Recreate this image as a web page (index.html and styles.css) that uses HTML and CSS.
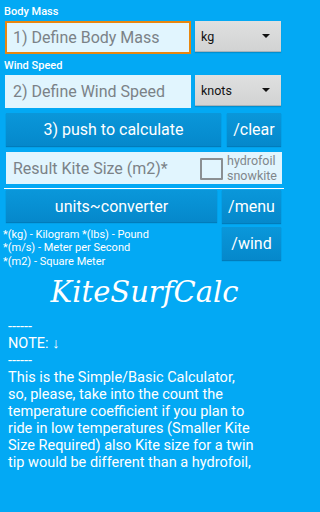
FILE: index.html
```html
<!DOCTYPE html>
<html>
<head>
<meta charset="utf-8">
<link rel="stylesheet" href="styles.css">
</head>
<body>
<div class="app">
  <div class="label">Body Mass</div>
  <div class="row">
    <div class="input focused">1) Define Body Mass</div>
    <div class="spinner"><span>kg</span><span class="caret"></span></div>
  </div>
  <div class="label second">Wind Speed</div>
  <div class="row">
    <div class="input">2) Define Wind Speed</div>
    <div class="spinner"><span>knots</span><span class="caret"></span></div>
  </div>
  <div class="row buttons">
    <div class="btn wide">3) push to calculate</div>
    <div class="btn narrow">/clear</div>
  </div>
  <div class="result">
    <span class="result-text">Result Kite Size (m2)*</span>
    <span class="check"></span>
    <span class="check-label">hydrofoil<br>snowkite</span>
  </div>
  <div class="divider"></div>
  <div class="grid">
    <div class="left">
      <div class="btn units">units~converter</div>
      <div class="legend">
        <div>*(kg) - Kilogram *(lbs) - Pound</div>
        <div>*(m/s) - Meter per Second</div>
        <div>*(m2) - Square Meter</div>
      </div>
    </div>
    <div class="right">
      <div class="btn side">/menu</div>
      <div class="btn side">/wind</div>
    </div>
  </div>
  <div class="title">KiteSurfCalc</div>
  <div class="note">
    <div>------</div>
    <div>NOTE: ↓</div>
    <div>------</div>
    <p>This is the Simple/Basic Calculator, so, please, take into the count the temperature coefficient if you plan to ride in low temperatures (Smaller Kite Size Required) also Kite size for a twin tip would be different than a hydrofoil,</p>
  </div>
</div>
</body>
</html>
```

FILE: styles.css
```css
html, body {
  margin: 0;
  padding: 0;
  background: #03a9f4;
}
body {
  width: 288px;
  height: 512px;
  overflow: hidden;
}
.app {
  font-family: Roboto, "Noto Sans", sans-serif;
  color: #ffffff;
  padding: 3px 6px 0 5px;
}
.label {
  font-size: 11px;
  font-weight: 500;
  height: 18px;
  line-height: 18px;
  margin-left: -1px;
}
.label.second {
  margin-top: 3px;
}
.row {
  display: flex;
  align-items: flex-start;
  gap: 4px;
}
.input {
  width: 186px;
  height: 33px;
  box-sizing: border-box;
  background: #e1f5fe;
  color: #7b8287;
  font-size: 16px;
  line-height: 33px;
  padding-left: 8px;
  white-space: nowrap;
}
.input.focused {
  border: 2px solid #e8870f;
  padding-left: 6px;
  line-height: 29px;
}
.spinner {
  width: 86px;
  height: 31px;
  box-sizing: border-box;
  background: linear-gradient(#dfe0e0, #d2d3d3);
  border-bottom: 1px solid #a9b3b8;
  box-shadow: 0 1px 1px rgba(0,0,0,0.15);
  color: #111;
  font-size: 12.5px;
  display: flex;
  align-items: center;
  justify-content: space-between;
  padding: 0 11px 0 6px;
}
.caret {
  width: 0;
  height: 0;
  border-left: 4px solid transparent;
  border-right: 4px solid transparent;
  border-top: 4px solid #111;
}
.buttons {
  margin-top: 5px;
  gap: 6px;
}
.btn {
  background: linear-gradient(#0a97da, #0588cb);
  box-shadow: 0 1px 1px rgba(0,40,80,0.35);
  color: #fff;
  font-size: 16px;
  height: 33px;
  display: flex;
  align-items: center;
  justify-content: center;
  box-sizing: border-box;
}
.btn.wide { width: 215px; margin-left: 1px; }
.btn.narrow { width: 54px; }
.result {
  margin-top: 6px;
  margin-left: 1px;
  height: 32px;
  width: 276px;
  background: #e1f5fe;
  display: flex;
  align-items: center;
  color: #7b8287;
  box-sizing: border-box;
  padding-left: 7px;
}
.result-text {
  font-size: 16px;
  flex: 1;
  white-space: nowrap;
}
.check {
  width: 23px;
  height: 22px;
  border: 2px solid #8a8f92;
  border-radius: 1px;
  box-sizing: border-box;
  margin-right: 4px;
  margin-top: 2px;
}
.check-label {
  font-size: 12.5px;
  line-height: 15px;
  color: #80878b;
  margin-right: 5px;
}
.divider {
  height: 1px;
  background: #ffffff;
  margin: 4px -2px 0 -1px;
}
.grid {
  display: grid;
  grid-template-columns: 211px 59px;
  column-gap: 5px;
  margin-top: 1px;
  margin-left: 1px;
}
.btn.units { height: 32px; }
.btn.side { height: 33px; margin-bottom: 4px; }
.legend {
  font-size: 11px;
  line-height: 13.3px;
  margin-top: 6px;
  margin-left: -3px;
  white-space: nowrap;
}
.title {
  font-family: "DejaVu Serif", "Liberation Serif", serif;
  font-style: italic;
  font-size: 29px;
  text-align: center;
  margin-top: 6px;
  height: 36px;
  line-height: 36px;
  margin-left: 2px;
}
.note {
  font-size: 14.5px;
  line-height: 17px;
  margin-top: 8px;
  padding-left: 3px;
}
.note p {
  margin: 0;
  width: 247px;
}
```
